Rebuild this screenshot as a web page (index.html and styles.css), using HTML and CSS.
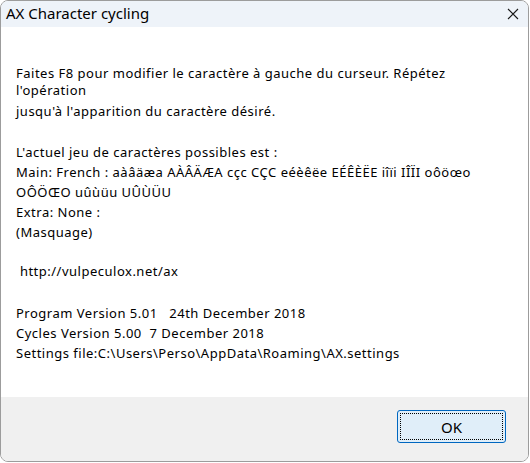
FILE: index.html
```html
<!DOCTYPE html>
<html>
<head>
<meta charset="utf-8">
<link rel="stylesheet" href="styles.css">
</head>
<body>
<div class="window">
  <div class="titlebar">
    <span class="title">AX Character cycling</span>
    <svg class="close" width="12" height="12" viewBox="0 0 12 12"><path d="M1 1 L11 11 M11 1 L1 11" stroke="#1a1a1a" stroke-width="1.1" fill="none"/></svg>
  </div>
  <div class="content">
    <div class="line tight first">Faites F8 pour modifier le caractère à gauche du curseur. Répétez</div>
    <div class="line tight">l'opération</div>
    <div class="line l3">jusqu'à l'apparition du caractère désiré.</div>
    <div class="line gap1">L'actuel jeu de caractères possibles est :</div>
    <div class="line">Main: French : aàâäæa AÀÂÄÆA cçc CÇC eéèêëe EÉÊÈËE iîïi IÎÏI oôöœo</div>
    <div class="line">OÔÖŒO uûùüu UÛÙÜU</div>
    <div class="line">Extra: None :</div>
    <div class="line">(Masquage)</div>
    <div class="line gap2"> http://vulpeculox.net/ax</div>
    <div class="line gap3">Program Version 5.01   24th December 2018</div>
    <div class="line">Cycles Version 5.00  7 December 2018</div>
    <div class="line">Settings file:C:\Users\Perso\AppData\Roaming\AX.settings</div>
  </div>
  <div class="footer">
    <button class="ok"><span class="focus">OK</span></button>
  </div>
</div>
</body>
</html>
```
FILE: styles.css
```css
html, body {
  margin: 0;
  padding: 0;
  background: #ffffff;
  width: 530px;
  height: 463px;
  overflow: hidden;
}
.window {
  box-sizing: border-box;
  width: 529px;
  height: 462px;
  border: 1px solid #9c9c9c;
  border-radius: 8px;
  overflow: hidden;
  display: flex;
  flex-direction: column;
  background: #ffffff;
  font-family: "Noto Sans", "DejaVu Sans", sans-serif;
  color: #000;
}
.titlebar {
  height: 26px;
  flex: none;
  background: #eef3f9;
  display: flex;
  align-items: center;
  justify-content: space-between;
  padding: 0 9px 0 5px;
}
.title {
  font-size: 15px;
  line-height: 26px;
  position: relative;
  top: -1px;
}
.close {
  display: block;
}
.content {
  flex: 1;
  padding: 38px 0 0 15px;
  font-size: 13px;
  letter-spacing: 0.5px;
}
.line {
  line-height: 20px;
  height: 20px;
  white-space: pre;
}
.line.tight {
  line-height: 17px;
  height: 17px;
}
.l3 { margin-top: 2px; }
.gap1 { margin-top: 21px; }
.gap2 { margin-top: 19px; }
.gap3 { margin-top: 22px; }
.footer {
  flex: none;
  height: 64px;
  background: #f0f0f0;
  display: flex;
  justify-content: flex-end;
  align-items: flex-start;
  padding: 13px 22px 0 0;
  box-sizing: border-box;
}
.ok {
  box-sizing: border-box;
  width: 109px;
  height: 33px;
  border: 1px solid #0067c0;
  border-radius: 3px;
  background: #e0eef9;
  padding: 2px;
  margin: 0;
  font-family: "Noto Sans", "DejaVu Sans", sans-serif;
  font-size: 15px;
  color: #000;
  display: flex;
}
.focus {
  flex: 1;
  border: 1px dotted #000;
  display: flex;
  align-items: center;
  justify-content: center;
}
```
